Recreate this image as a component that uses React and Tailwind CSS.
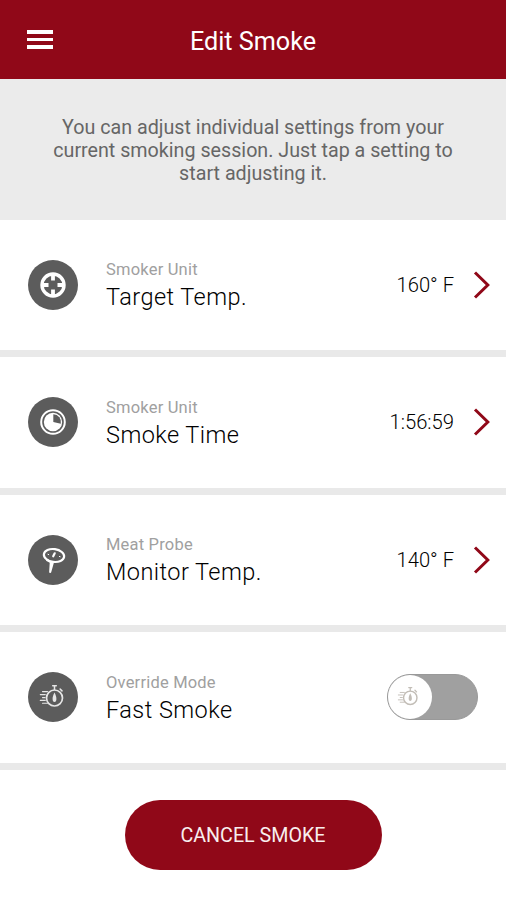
function TargetIcon() {
  return (
    <svg viewBox="0 0 50 50" className="size-[50px]" fill="none">
      <circle cx="25" cy="25" r="11" stroke="#fff" strokeWidth="3.4" />
      <path d="M25 15v5.500M25 29.500v5.500M15 25h5.500M29.500 25h5.500" stroke="#fff" strokeWidth="3.8" />
    </svg>
  );
}

function TimeIcon() {
  return (
    <svg viewBox="0 0 50 50" className="size-[50px]" fill="none">
      <circle cx="25" cy="25" r="11.8" stroke="#fff" strokeWidth="2" />
      <circle cx="25" cy="25" r="9.2" fill="#fff" />
      <path d="M25.300 25V17.200a7.800 7.800 0 0 1 7.500 9.600z" fill="#5c5c5c" />
    </svg>
  );
}

function ProbeIcon() {
  return (
    <svg viewBox="0 0 50 50" className="size-[50px]" fill="none" stroke="#fff" strokeLinecap="round" strokeLinejoin="round">
      <ellipse cx="26" cy="20.500" rx="10.200" ry="6.400" strokeWidth="2.200" transform="rotate(8 26 20.500)" />
      <path d="M19 25l3.800 2.200-.6 9.800 2.600-9.400" strokeWidth="2.100" />
      <path d="M25.200 21.300l1.500-3" strokeWidth="2.200" />
      <path d="M20 19.300l.7.300M31.400 21.500l.7.200" strokeWidth="1" />
    </svg>
  );
}

function FastIcon({ className }) {
  return (
    <svg viewBox="0 0 50 50" className={className} fill="none" stroke="currentColor" strokeLinecap="round">
      <circle cx="26.500" cy="26" r="8" strokeWidth="1.700" />
      <path d="M26.500 17.600v-3M24.700 13.800h3.600M32.100 17l1.900 1.900" strokeWidth="1.500" />
      <path d="M26.500 20.600c1.300 2.600 1.900 4.300 1.900 6.300 0 1.800-.7 3-1.900 3s-1.900-1.200-1.900-3c0-2 .6-3.700 1.900-6.300z" fill="currentColor" stroke="none" />
      <path d="M14.500 19.600h5M12.300 22.600h5M14.500 25.600h2.600M12.300 28.400h5M14.500 31.200h5" strokeWidth="1.100" />
    </svg>
  );
}

function Chevron() {
  return (
    <svg viewBox="0 0 18 28" className="ml-[19px] h-7 w-[18px]" fill="none">
      <path d="M2 1.500L14.800 14 2 26.500" stroke="#900818" strokeWidth="3" />
    </svg>
  );
}

function Toggle() {
  return (
    <div className="mr-[13px] flex h-[46px] w-[91px] items-center rounded-full border border-[#999] bg-[#a0a0a0]">
      <div className="flex size-11 items-center justify-center rounded-full bg-white">
        <FastIcon className="mr-0.5 size-[44px] text-[#c2bdb6]" />
      </div>
    </div>
  );
}

const settings = [
  { label: 'Smoker Unit', title: 'Target Temp.', value: '160° F', icon: <TargetIcon /> },
  { label: 'Smoker Unit', title: 'Smoke Time', value: '1:56:59', icon: <TimeIcon /> },
  { label: 'Meat Probe', title: 'Monitor Temp.', value: '140° F', icon: <ProbeIcon /> },
  { label: 'Override Mode', title: 'Fast Smoke', icon: <FastIcon className="size-[50px] text-[#e6e6e6]" /> },
];

function SettingRow({ label, title, value, icon }) {
  return (
    <div className="flex h-[137.5px] shrink-0 items-center border-b-[7px] border-[#e9e9e9] pr-[15px] pl-7">
      <div className="flex size-[50px] shrink-0 items-center justify-center rounded-full bg-[#5c5c5c]">{icon}</div>
      <div className="ml-7 flex-1 pt-[2px]">
        <div className="text-[16.5px] leading-5 tracking-[0.2px] text-[#a0a0a0]">{label}</div>
        <div className="mt-[3px] text-[23.5px] leading-7 font-light tracking-[0.45px] text-black">{title}</div>
      </div>
      {value ? (
        <>
          <span className="text-[20.2px] font-light text-black">{value}</span>
          <Chevron />
        </>
      ) : (
        <Toggle />
      )}
    </div>
  );
}

export default function App() {
  return (
    <div className="flex h-[900px] w-full flex-col overflow-hidden bg-white font-['Roboto',sans-serif]">
      <header className="grid h-[79px] shrink-0 grid-cols-[1fr_auto_1fr] items-center bg-[#900818] px-[27px] text-white">
        <button aria-label="Menu" className="flex w-[26px] flex-col gap-[4px]">
          <span className="h-[3.5px] w-full bg-white" />
          <span className="h-[3.5px] w-full bg-white" />
          <span className="h-[3.5px] w-full bg-white" />
        </button>
        <h1 className="pt-[4px] text-[25.2px] leading-8">Edit Smoke</h1>
      </header>

      <p className="h-[140.5px] shrink-0 bg-[#ebebeb] pt-[37px] text-center text-[19.7px] leading-[23px] text-[#666]">
        You can adjust individual settings from your
        <br />
        current smoking session. Just tap a setting to
        <br />
        start adjusting it.
      </p>

      {settings.map((s) => (
        <SettingRow key={s.title} {...s} />
      ))}

      <button className="mx-auto mt-[30.5px] h-[70px] w-[257px] shrink-0 rounded-full bg-[#900818] pt-0.5 text-[19.7px] text-[#f8eeee]">
        CANCEL SMOKE
      </button>
    </div>
  );
}
